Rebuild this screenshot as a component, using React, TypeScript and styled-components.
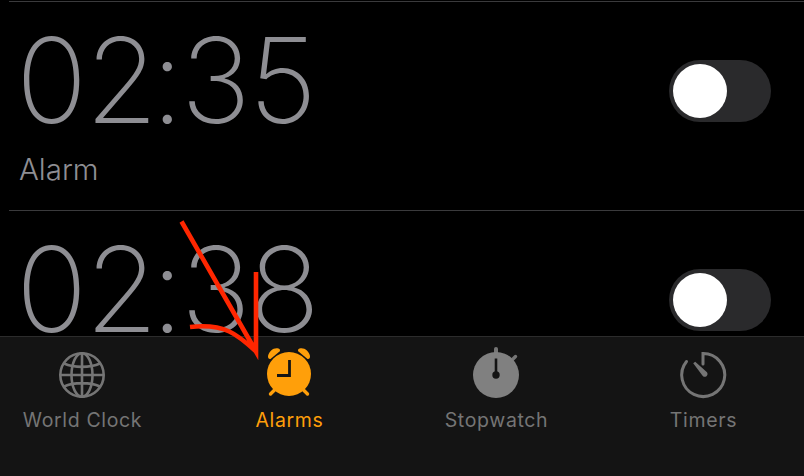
import React from "react";
import styled, { createGlobalStyle } from "styled-components";

const Global = createGlobalStyle`
  html, body { margin: 0; padding: 0; background: #000; }
`;

const Screen = styled.div`
  position: relative;
  width: 804px;
  height: 476px;
  overflow: hidden;
  background: #000;
  display: flex;
  flex-direction: column;
  font-family: Inter, "Liberation Sans", sans-serif;
`;

const AlarmList = styled.div`
  flex: 1;
  min-height: 0;
  overflow: hidden;
  padding-top: 1px;
`;

const AlarmRow = styled.div`
  box-sizing: border-box;
  height: 209px;
  margin-left: 9px;
  border-top: 1px solid #3a3a3c;
  padding: 0 33px 0 7px;
  display: flex;
  align-items: flex-start;
  justify-content: space-between;
`;

const AlarmInfo = styled.div`
  display: flex;
  flex-direction: column;
`;

const Time = styled.div`
  font-size: 118px;
  font-weight: 150;
  line-height: 118px;
  margin-top: 19px;
  letter-spacing: -2px;
  color: #8e8e93;
  white-space: nowrap;
`;

const Colon = styled.span`
  font-weight: 200;
  margin: 0 -1px 0 -5px;
`;

const Label = styled.div`
  font-size: 29.5px;
  font-weight: 300;
  line-height: 34px;
  margin-top: 13px;
  margin-left: 3px;
  color: #8e8e93;
`;

const Switch = styled.div`
  box-sizing: border-box;
  width: 102px;
  height: 62px;
  margin-top: 58px;
  padding: 4px;
  border-radius: 31px;
  background: #2a2a2c;
`;

const Knob = styled.div`
  width: 54px;
  height: 54px;
  border-radius: 50%;
  background: #fff;
`;

const TabBar = styled.nav`
  box-sizing: border-box;
  flex: none;
  height: 140px;
  border-top: 1px solid #2c2c2c;
  background: #141414;
  padding: 10px 0 0 12px;
  display: grid;
  grid-template-columns: repeat(4, 140px);
  column-gap: 67px;
  align-items: start;
`;

const Tab = styled.div<{ $active?: boolean }>`
  display: flex;
  flex-direction: column;
  align-items: center;
  color: ${(p) => (p.$active ? "#ff9f0a" : "#757575")};
`;

const TabLabel = styled.span`
  font-size: 19.5px;
  font-weight: 400;
  line-height: 24px;
  letter-spacing: 0.65px;
  margin: 5px 0 0 1px;
  white-space: nowrap;
`;

const Icon = styled.svg`
  display: block;
  width: 56px;
  height: 56px;
`;

const Annotation = styled.svg`
  position: absolute;
  left: 0;
  top: 0;
  pointer-events: none;
`;

const GlobeIcon = () => (
  <Icon viewBox="0 0 56 56" fill="none" stroke="currentColor" strokeWidth="2.6">
    <circle cx="28" cy="28" r="21.7" />
    <ellipse cx="28" cy="28" rx="10.5" ry="21.7" />
    <path d="M28 6.3V49.7M6.3 28H49.7M10 16.5C20 21 36 21 46 16.5M10 39.5C20 35 36 35 46 39.5" />
  </Icon>
);

const AlarmIcon = () => (
  <Icon viewBox="0 0 56 56">
    <circle cx="28" cy="27" r="22" fill="currentColor" />
    <path fill="currentColor" d="M7 9C8 4 13 0 17.500 1.500C19 2 19.500 3.500 18.500 4.500L9.500 12C8 12.500 6.800 11 7 9Z" />
    <path fill="currentColor" d="M49 9C48 4 43 0 38.500 1.500C37 2 36.500 3.500 37.500 4.500L46.500 12C48 12.500 49.200 11 49 9Z" />
    <path stroke="currentColor" strokeWidth="3.4" strokeLinecap="round" d="M14 42.500L9.500 47M42 42.500L46.500 47" />
    <path fill="none" stroke="#141414" strokeWidth="2.8" d="M28.500 13V28.500H16" />
  </Icon>
);

const StopwatchIcon = () => (
  <Icon viewBox="0 0 56 56">
    <rect x="26" y="0" width="4" height="8" rx="2" fill="currentColor" />
    <path stroke="currentColor" strokeWidth="3.4" strokeLinecap="round" d="M44 13L47.500 9.500" />
    <circle cx="28" cy="28" r="23" fill="#808080" />
    <path stroke="#141414" strokeWidth="2.6" d="M28 11.500V28" />
    <circle cx="28" cy="28" r="3.700" fill="#141414" />
  </Icon>
);

const TimerIcon = () => (
  <Icon viewBox="0 0 56 56" fill="none">
    <path
      stroke="currentColor"
      strokeWidth="3"
      strokeLinecap="round"
      d="M28 17V6.500A21.500 21.500 0 1 1 11.500 14.500"
    />
    <path fill="currentColor" d="M18.200 16.200L20.200 14.800L32 25.300C33 26.800 32.600 28.400 31.200 29.400C29.800 30.200 28.200 29.800 27.400 28.600Z" />
  </Icon>
);

const alarms = [
  { hour: "02", minute: "35", label: "Alarm" },
  { hour: "02", minute: "38", label: "Alarm" },
];

const tabs = [
  { name: "World Clock", icon: <GlobeIcon /> },
  { name: "Alarms", icon: <AlarmIcon />, active: true },
  { name: "Stopwatch", icon: <StopwatchIcon /> },
  { name: "Timers", icon: <TimerIcon /> },
];

export default function App() {
  return (
    <Screen>
      <Global />
      <AlarmList>
        {alarms.map((a) => (
          <AlarmRow key={a.minute}>
            <AlarmInfo>
              <Time>
                {a.hour}
                <Colon>:</Colon>
                {a.minute}
              </Time>
              <Label>{a.label}</Label>
            </AlarmInfo>
            <Switch>
              <Knob />
            </Switch>
          </AlarmRow>
        ))}
      </AlarmList>
      <TabBar>
        {tabs.map((t) => (
          <Tab key={t.name} $active={t.active}>
            {t.icon}
            <TabLabel>{t.name}</TabLabel>
          </Tab>
        ))}
      </TabBar>
      <Annotation width="804" height="476" viewBox="0 0 804 476" fill="none">
        <path
          stroke="#ff2600"
          strokeWidth="4.6"
          strokeLinejoin="miter"
          d="M181.500 221.500L256 351.500V272M190 327C225 323 238 335 256 351.500"
        />
      </Annotation>
    </Screen>
  );
}
